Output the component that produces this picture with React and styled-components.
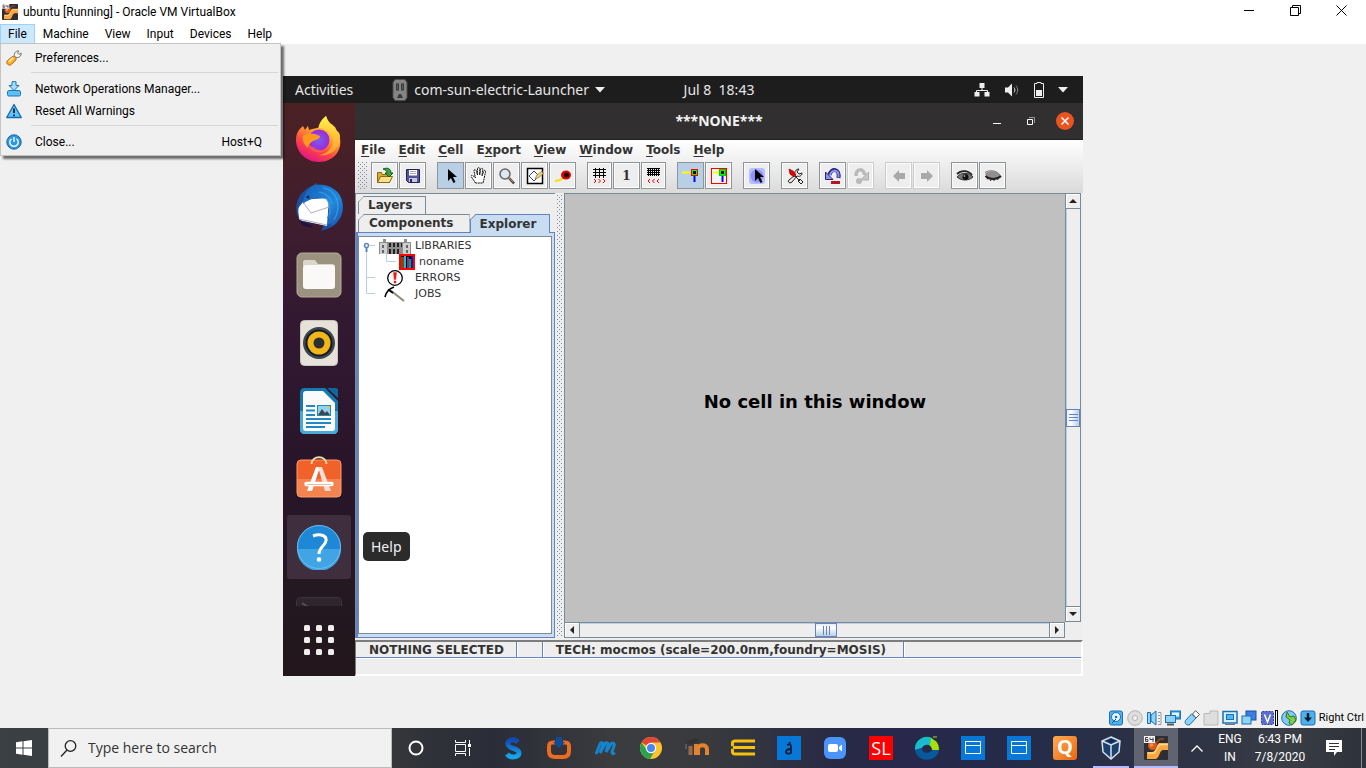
import React from "react";
import styled, { createGlobalStyle, css } from "styled-components";

const host = `Roboto, "Open Sans", sans-serif`;
const humanist = `"Open Sans", "Noto Sans", sans-serif`;
const ubuntu = `"Noto Sans", "Open Sans", sans-serif`;
const java = `"DejaVu Sans", Verdana, sans-serif`;

const Global = createGlobalStyle`
  *, *::before, *::after { box-sizing: border-box; }
  body { margin: 0; background: #f0f0f0; font-family: ${host}; }
  button { font: inherit; color: inherit; border: 0; padding: 0; margin: 0; background: none; }
  ul { list-style: none; margin: 0; padding: 0; }
  svg { display: block; flex: none; }
`;

const Page = styled.div`
  min-height: 100vh;
  display: flex;
  flex-direction: column;
  background: #f0f0f0;
`;

/* ---------- host window ---------- */
const HostTitle = styled.header`
  height: 24px;
  display: flex;
  align-items: center;
  background: #fff;
  padding: 0 2px;
  color: #000;
`;
const HostName = styled.h1`
  flex: 1;
  margin: 0 0 0 5px;
  font: 400 12px/20px ${host};
`;
const CaptionButton = styled.button`
  width: 46px;
  height: 20px;
  align-self: flex-start;
  display: grid;
  place-items: center;
`;
const HostMenuBar = styled.nav`
  position: relative;
  height: 20px;
  display: flex;
  background: #fff;
  font-size: 12px;
  line-height: 18px;
`;
const HostMenuButton = styled.button`
  height: 20px;
  padding: 0 7px;
  border: 1px solid ${(p) => (p.$open ? "#99d1ff" : "transparent")};
  background: ${(p) => (p.$open ? "#cce8ff" : "transparent")};
`;
const DropMenu = styled.ul`
  position: absolute;
  z-index: 5;
  left: 0;
  top: 19px;
  width: 281px;
  padding: 3px 2px 2px;
  background: #f0f0f0;
  border: 1px solid #c4c4c4;
  box-shadow: 3px 3px 2px rgba(0, 0, 0, 0.55);
`;
const DropItem = styled.button`
  width: 100%;
  height: 22px;
  display: grid;
  grid-template-columns: 32px 1fr auto;
  align-items: center;
  padding: 0 16px 0 0;
  text-align: left;
  line-height: 20px;
  svg { margin-left: 3px; }
`;
const DropRule = styled.li`
  height: 9px;
  margin-left: 28px;
  padding-top: 3px;
  &::before { content: ""; display: block; height: 1px; background: #d5d5d5; }
`;

const Stage = styled.main`
  flex: 1;
  display: flex;
  padding: 32px max(16px, calc(50% - 400px));
`;
const HostStatus = styled.footer`
  height: 20px;
  display: flex;
  align-items: center;
  justify-content: flex-end;
  gap: 3px;
  padding-right: 2px;
  font-size: 11px;
  line-height: 20px;
  white-space: nowrap;
`;
const Bar = styled.span`
  width: 3px;
  height: 16px;
  margin-left: -4px;
  border: 1px solid #000;
  background: #fff;
`;

/* ---------- guest desktop ---------- */
const Guest = styled.section`
  flex: 1;
  min-height: 600px;
  min-width: 0;
  display: flex;
  flex-direction: column;
  font-family: ${ubuntu};
`;
const TopBar = styled.div`
  height: 27px;
  display: grid;
  grid-template-columns: 1fr auto 1fr;
  align-items: center;
  background: #1d1d1d;
  color: #e6e6e6;
  font-size: 14px;
  line-height: 26px;
`;
const TopLeft = styled.div`
  display: flex;
  align-items: center;
  padding-left: 12px;
`;
const Launcher = styled.button`
  display: flex;
  align-items: center;
  gap: 6px;
  margin-left: 39px;
  white-space: nowrap;
`;
const Clock = styled.button`
  white-space: pre;
  padding-left: 72px;
`;
const Tray = styled.div`
  display: flex;
  justify-content: flex-end;
  align-items: center;
  gap: 14px;
  padding-right: 15px;
`;
const Desk = styled.div`
  flex: 1;
  display: flex;
  min-height: 0;
`;
const Dock = styled.nav`
  width: 72px;
  flex: none;
  display: flex;
  flex-direction: column;
  align-items: center;
  gap: 4px;
  padding-top: 4px;
  background: linear-gradient(#4b2124 0, #431f2b 15%, #361a31 32%, #2f1830 45%, #29152a 62%, #241822 85%, #22161b 100%);
`;
const DockItem = styled.button`
  position: relative;
  width: 64px;
  height: 64px;
  flex: none;
  display: grid;
  place-items: center;
  border-radius: 3px;
  background: ${(p) => (p.$active ? "#3e2e3e" : "transparent")};
`;
const Peek = styled.button`
  height: 23px;
  width: 64px;
  display: grid;
  justify-items: center;
  align-items: start;
  padding-top: 14px;
  overflow: hidden;
`;
const AppsButton = styled.button`
  flex: 1;
  width: 64px;
  display: grid;
  place-items: center;
  padding-bottom: 6px;
`;
const Tooltip = styled.span`
  position: absolute;
  z-index: 3;
  left: 76px;
  top: 17px;
  height: 29px;
  padding: 0 8px;
  border-radius: 5px;
  background: #2b2b2b;
  color: #f0f0f0;
  font-size: 14px;
  line-height: 29px;
`;
const AppWindow = styled.div`
  flex: 1;
  min-width: 0;
  display: flex;
  flex-direction: column;
  background: #eee;
  color: #333;
  font-family: ${java};
`;
const AppTitle = styled.header`
  height: 37px;
  display: grid;
  grid-template-columns: 1fr auto 1fr;
  align-items: center;
  background: #322f30;
  border-bottom: 1px solid #222;
  color: #f2f2f2;
  h2 { margin: 0; font: 700 14px/36px ${ubuntu}; }
`;
const AppControls = styled.div`
  display: flex;
  justify-content: flex-end;
  align-items: center;
  gap: 26px;
  padding-right: 9px;
`;
const CloseDot = styled.button`
  width: 18px;
  height: 18px;
  margin-left: -5px;
  display: grid;
  place-items: center;
  border-radius: 50%;
  background: #e95420;
`;
const Chrome = styled.div`
  background: linear-gradient(#fff, #dadada);
`;
const MenuRow = styled.nav`
  height: 20px;
  display: flex;
  gap: 13px;
  padding-left: 6px;
  font: 700 12px/19px ${java};
  u { text-underline-offset: 2px; }
`;
const ToolBar = styled.div`
  height: 33px;
  display: flex;
  gap: 11px;
  padding: 2px 0 0 3px;
`;
const dots = css`
  background-image: radial-gradient(circle at 0 0, #7a8a99 1px, transparent 1px), radial-gradient(circle at 0 0, #7a8a99 1px, transparent 1px);
  background-size: 4px 4px;
  background-position: 0 0, 2px 2px;
`;
const Grip = styled.span`
  width: 10px;
  height: 28px;
  margin: 0 -8px 0 0;
  ${dots}
`;
const ToolGroup = styled.div`
  display: flex;
  gap: 1px;
`;
const ToolButton = styled.button`
  width: ${(p) => (p.$narrow ? 25 : 27)}px;
  height: 27px;
  display: grid;
  place-items: center;
  border: 1px solid ${(p) => (p.$dim ? "#ccc" : "#8f9499")};
  background: ${(p) => (p.$on ? "#b8cfe5" : "#eee")};
  box-shadow: ${(p) => (p.$on ? "none" : "inset -1px -1px #fff, inset 1px 1px #fafafa")};
  font: 700 12px/20px "DejaVu Serif", serif;
`;
const Work = styled.div`
  flex: 1;
  display: flex;
  min-height: 0;
  padding-bottom: 2px;
`;
const SidePanel = styled.aside`
  width: 200px;
  flex: none;
  display: flex;
  flex-direction: column;
  border-top: 1px solid #7a8a99;
  border-left: 1px solid #7a8a99;
  padding-top: 2px;
`;
const Tabs = styled.div`
  display: flex;
  padding-left: 2px;
`;
const Tab = styled.button`
  position: relative;
  height: ${(p) => (p.$on ? 19 : 18)}px;
  margin-bottom: ${(p) => (p.$on ? -1 : 0)}px;
  padding: ${(p) => (p.$wide ? "0 15px 0 10px" : "0 13px 0 9px")};
  border: 1px solid ${(p) => (p.$on ? "#6382bf" : "#7a8a99")};
  border-bottom: 0;
  background: ${(p) => (p.$on ? "#c8ddf2" : "#eee")};
  clip-path: polygon(6px 0, 100% 0, 100% 100%, 0 100%, 0 6px);
  font: 700 12px/17px ${java};
  &::before {
    content: "";
    position: absolute;
    left: -3px;
    top: 2px;
    width: 9px;
    height: 1px;
    background: #7a8a99;
    transform: rotate(-45deg);
  }
`;
const TabBody = styled.div`
  flex: 1;
  display: flex;
  border: 1px solid #6382bf;
  border-left-width: 2px;
  padding: 3px 2px 3px 0;
  background: #c8ddf2;
`;
const Tree = styled.ul`
  flex: 1;
  padding-top: 1px;
  background: #fff;
  border: 1px solid #7a8a99;
  font: 400 11px/16px ${java};
  position: relative;
`;
const TreeRow = styled.li`
  height: 16px;
  display: flex;
  align-items: center;
  padding-left: ${(p) => p.$indent}px;
  gap: 4px;
`;
const IconCell = styled.span`
  width: ${(p) => p.$w}px;
  display: grid;
  place-items: center;
`;
const Splitter = styled.div`
  width: 9px;
  flex: none;
  display: flex;
  justify-content: center;
  padding: 2px 0;
  &::before { content: ""; width: 5px; ${dots} }
`;
const Editor = styled.div`
  flex: 1;
  min-width: 0;
  display: grid;
  grid-template-columns: 1fr 16px;
  grid-template-rows: 1fr 16px;
  border-top: 1px solid #7a8a99;
  border-left: 1px solid #7a8a99;
  margin-right: 2px;
`;
const Canvas = styled.div`
  display: grid;
  place-items: center;
  background: #c0c0c0;
  color: #000;
  font: 700 18px/24px ${java};
  padding-bottom: 12px;
`;
const Scroll = styled.div`
  display: flex;
  flex-direction: ${(p) => (p.$v ? "column" : "row")};
  border: 1px solid #7a8a99;
  ${(p) => (p.$v ? "border-top: 0;" : "border-left: 0;")}
  background: #eee;
  box-shadow: inset 1px 1px #b8cfe5;
`;
const ScrollButton = styled.button`
  flex: none;
  width: ${(p) => (p.$v ? "auto" : "15px")};
  height: ${(p) => (p.$v ? "15px" : "auto")};
  display: grid;
  place-items: center;
  background: #eee;
  border: 0 solid #7a8a99;
  border-width: ${(p) => p.$edge};
  box-shadow: inset 1px 1px #fff;
`;
const Track = styled.div`
  flex: 1;
  display: flex;
  align-items: center;
  justify-content: center;
  flex-direction: ${(p) => (p.$v ? "column" : "row")};
`;
const Thumb = styled.div`
  width: ${(p) => (p.$v ? "100%" : "22px")};
  height: ${(p) => (p.$v ? "18px" : "100%")};
  ${(p) => (p.$v ? "margin-top: 20px;" : "margin-left: 23px;")}
  display: grid;
  place-items: center;
  border: 1px solid #6382bf;
  background: linear-gradient(${(p) => (p.$v ? "90deg, " : "")}#e3edf7, #fff 30%, #b8cfe5);
`;
const StatusArea = styled.footer`
  height: 36px;
  border: solid;
  border-width: 2px 2px 2px 1px;
  border-color: #7d7d7d #fff #fff #7d7d7d;
  display: flex;
  flex-direction: column;
`;
const StatusRow = styled.div`
  height: 16px;
  display: flex;
  border-bottom: 1px solid #6382bf;
  box-shadow: 0 1px #fff;
  font: 700 12px/17px ${java};
  white-space: nowrap;
`;
const StatusCell = styled.span`
  min-width: 26px;
  padding: 0 12px 0 13px;
  border-right: 1px solid #6382bf;
  box-shadow: 1px 0 #fff;
  &:last-child { padding-right: 17px; }
`;

/* ---------- taskbar ---------- */
const Taskbar = styled.div`
  height: 40px;
  display: flex;
  align-items: stretch;
  color: #fff;
  background: linear-gradient(90deg, #3a4044 0, #35373a 28%, #2a2c38 36%, #3b3c3e 45%, #383a3e 52%, #272a44 61%, #27284c 66%, #242b48 74%, #282f47 80%, #303544 89%, #3a3d45 94%, #2d323b 100%);
`;
const TaskButton = styled.button`
  position: relative;
  width: ${(p) => p.$w || 46}px;
  flex: none;
  display: grid;
  place-items: center;
  background: ${(p) => (p.$on ? "#606370" : "transparent")};
  &::after {
    content: "";
    display: ${(p) => (p.$line ? "block" : "none")};
    position: absolute;
    left: ${(p) => (p.$on ? 0 : 5)}px;
    right: ${(p) => (p.$on ? 0 : 5)}px;
    bottom: 0;
    height: 2px;
    background: #b9b9ff;
  }
`;
const Search = styled.label`
  width: 344px;
  flex: 0 1 344px;
  display: flex;
  align-items: center;
  gap: 11px;
  padding-left: 11px;
  background: #f1f1f1;
  border: 1px solid #bababa;
  input {
    flex: 1;
    min-width: 0;
    border: 0;
    padding: 0;
    outline: 0;
    background: none;
    font: 400 14px/20px ${humanist};
  }
  input::placeholder { color: #333; opacity: 1; }
`;
const TaskApps = styled.div`
  display: flex;
  flex: 1;
  padding-left: 1px;
`;
const TaskGap = styled.span`
  width: 3px;
`;
const SysTray = styled.div`
  display: flex;
  align-items: stretch;
  font-size: 12px;
  line-height: 18px;
  text-align: center;
`;
const TrayText = styled.button`
  width: ${(p) => p.$w}px;
  display: flex;
  flex-direction: column;
  justify-content: center;
  align-items: center;
`;
const ShowDesktop = styled.button`
  width: 5px;
  border-left: 1px solid #888b92;
`;

/* ---------- drawings ---------- */
const S = ({ w = 16, h = w, vb, children, ...rest }) => (
  <svg width={w} height={h} viewBox={vb || `0 0 ${w} ${h}`} fill="none" aria-hidden="true" {...rest}>
    {children}
  </svg>
);

const VmIcon = ({ size = 16 }) => (
  <S w={size} vb="0 0 24 24">
    <rect width="24" height="24" rx="1" fill="#2e2f34" />
    <path d="M3 16h5c4 0 4-7 7-9h9v7h-5c-4 1-3 7-7 9H3z" fill="#fba63e" />
    <path d="M4 17h5c4 0 3-6 7-8.500h8" stroke="#ffd88c" strokeWidth="1.500" />
    <path d="M11 8l5-5h4" stroke="#7a4630" strokeWidth="2" />
    <circle cx="8.500" cy="9.500" r="4.500" fill="#dc5a1e" />
    <circle cx="7.500" cy="9" r="1.800" fill="#f5914f" />
    <rect x="0" y="0" width="11" height="7" fill="#f4f4f4" />
    <path d="M4 1.500H1.500v4H4v-2H2M6 1.500v2h3.500M9 1.500v4.500" stroke="#444" />
  </S>
);

const Wrench = () => (
  <S>
    <path d="M8.500 6.500C7.500 3 10 .5 13 1l-1.500 2 1.500 1.500L15.200 3c.3 3-2 5-5 4.500z" fill="#f4f4f4" stroke="#777" />
    <path d="M1.500 10.500l5-4c2-1 4.500 1.500 3.300 3.500l-4.500 4.500c-2.500 2-6-1.200-3.800-4z" fill="#ffb02a" stroke="#b5630f" />
    <path d="M3 11.500l4-3.500" stroke="#ffe9a0" strokeWidth="1.800" />
  </S>
);
const NetDown = () => (
  <S>
    <path d="M1.500 11c0-1 .5-1.500 1.500-1.500h10c1 0 1.500.5 1.500 1.500v2.500c0 1-.5 1.500-1.500 1.500H3c-1 0-1.500-.5-1.500-1.500z" fill="#5cc0f5" stroke="#1c74b8" />
    <path d="M6 .7h4v3.800h3L8 9.500l-5-5h3z" fill="#a5e0ff" stroke="#1c74b8" />
  </S>
);
const WarnIcon = () => (
  <S>
    <path d="M8 1.500L15.300 14.500H.7z" fill="#5fc4fb" stroke="#1569ad" strokeWidth="1.300" strokeLinejoin="round" />
    <path d="M8 5.500v4.500M8 11.500v1.800" stroke="#0b2a4c" strokeWidth="2" />
  </S>
);
const PowerIcon = () => (
  <S>
    <circle cx="8" cy="8" r="7.200" fill="#2d96dc" stroke="#1567a8" />
    <path d="M5.500 4.800a4.200 4.200 0 1 0 5 0M8 3v5" stroke="#e8f6ff" strokeWidth="1.500" />
  </S>
);

const Socket = () => (
  <S w={16} h={22}>
    <path d="M3 .5h10l2 3v15l-2 3H3l-2-3v-15z" fill="#858585" stroke="#4e4e4e" />
    <path d="M4 4.500h3v7H4zM9 4.500h3v7H9zM7 15h2l2 4H5z" fill="#3a3a3a" />
    <path d="M5 5.500h1v5H5zM10 5.500h1v5h-1z" fill="#5c5c5c" />
  </S>
);
const Caret = ({ color = "#eee" }) => (
  <S w={10} h={6}><path d="M0 0h10L5 5.500z" fill={color} /></S>
);
const Network = () => (
  <S w={16}>
    <path d="M5.500 1h5v5h-5zM.5 10h5v4.500h-5zM10.500 10h5v4.500h-5z" fill="#eee" />
    <path d="M8 5v3M2.500 11V8.500h11V11" stroke="#eee" />
  </S>
);
const Sound = () => (
  <S w={16}>
    <path d="M1 5.500h3l4-4v13l-4-4H1z" fill="#eee" />
    <path d="M10 5.500c1.200 1.500 1.200 3.500 0 5" stroke="#ddd" />
    <path d="M12 3.500c2.300 3 2.300 6 0 9" stroke="#888" />
  </S>
);
const Battery = () => (
  <S w={10} h={16}>
    <path d="M3 1.500V.5h4v1h2.500v14h-9v-14z" stroke="#eee" />
    <path d="M2 8h6v6H2z" fill="#eee" />
  </S>
);

const Firefox = () => (
  <S w={46} vb="0 0 46 46">
    <defs>
      <linearGradient id="ffA" x1=".8" y1="0" x2=".3" y2="1"><stop offset="0" stopColor="#fff44f" /><stop offset=".4" stopColor="#ffa62b" /><stop offset=".7" stopColor="#ff4545" /><stop offset="1" stopColor="#e0128a" /></linearGradient>
      <radialGradient id="ffB"><stop offset="0" stopColor="#7a5cf0" /><stop offset="1" stopColor="#9a2bd8" /></radialGradient>
      <linearGradient id="ffC" x1="0" y1="0" x2="0" y2="1"><stop offset="0" stopColor="#fff148" /><stop offset="1" stopColor="#ff9a2e" /></linearGradient>
    </defs>
    <path d="M7 10l2 4c1-2 2-3 3-4l1 4c3-1 6-2 9-2 2-6 5-9 8-12 2 5 4 8 7 9l1 4 3 2c3 5 4 10 3 15C42 40 33 46 23 46 9 46 0 35 0 24 0 17 3 13 7 10z" fill="url(#ffA)" />
    <path d="M30 0c-4 3-7 7-7 12 9 0 14 7 14 14-1 8-7 12-14 13 10 2 21-5 21-18 0-3-1-5-3-6l-2-4c-4-3-8-5-9-11z" fill="url(#ffC)" />
    <circle cx="23" cy="24" r="10.500" fill="url(#ffB)" />
    <path d="M7 20c3-3 9-2 12-2l5 2c0 3-4 4-7 5-3 2-5 4-5 7-4-3-6-8-5-12z" fill="#ff9a1f" />
    <path d="M13 30c2 6 10 8 16 5-5-1-8-1-11-4z" fill="#ff7139" opacity=".5" />
  </S>
);
const Thunderbird = () => (
  <S w={48} vb="0 0 48 48">
    <defs><linearGradient id="tb" x1="0" y1="0" x2="1" y2="1"><stop offset="0" stopColor="#1560b8" /><stop offset=".6" stopColor="#2089dc" /><stop offset="1" stopColor="#1b4aa5" /></linearGradient></defs>
    <path d="M17 3l4-3 2 2c12-2 25 8 25 22 0 12-8 21-22 24l3-6L5 38C-3 26 2 9 17 3z" fill="#1c4f9f" />
    <path d="M4 37c1-3-2-8 0-13l4-5 9-3 17-1-2 28z" fill="#fff" />
    <path d="M8 19l8 11 18-6M32 42L4 36" stroke="#b0b0ba" />
    <path d="M17 3c9-3 21 0 27 8 6 9 5 22-4 30l-5 3 2-4-5 2 2-6-2-1c4-7 3-14-1-19-7-2-14-2-23 5 1-7 2-13 9-18z" fill="url(#tb)" />
    <path d="M28 5c7 1 12 6 14 12 2 7 0 15-3 20M24 9c7 1 12 6 13 12M31 15c4 5 5 11 3 17" stroke="#4db0ee" strokeWidth="1.500" opacity=".5" />
    <circle cx="13" cy="14" r="1.500" fill="#102050" />
    <path d="M4 36c5 5 10 4 14 8C11 45 5 42 4 36z" fill="#22104a" />
  </S>
);
const Files = () => (
  <S w={46} vb="0 0 46 46">
    <rect x="1" y="1" width="44" height="44" rx="5" fill="#9b927f" stroke="#b5ad9b" />
    <path d="M7 14v-4c0-1 1-2 2-2h10l3 4h14c2 0 3 1 3 3z" fill="#dad6ca" />
    <rect x="7" y="13" width="32" height="24" rx="3" fill="#faf9f7" />
  </S>
);
const Speaker = () => (
  <S w={38} h={46}>
    <rect x=".5" y=".5" width="37" height="45" rx="4" fill="#e6e2d9" stroke="#cbc6bb" />
    <circle cx="19" cy="23" r="16" fill="#3b4651" /><circle cx="19" cy="23" r="13.500" fill="#17191c" />
    <circle cx="19" cy="23" r="11.500" fill="#f1b719" /><circle cx="19" cy="23" r="5.500" fill="#2d3033" />
  </S>
);
const Writer = () => (
  <S w={38} h={46}>
    <path d="M4 0h21l13 13v29c0 2-2 4-4 4H4c-2 0-4-2-4-4V4c0-2 2-4 4-4z" fill="#1479ae" />
    <path d="M0 23h38v19c0 2-2 4-4 4H4c-2 0-4-2-4-4z" fill="#48a8d7" />
    <path d="M27 0h9c1 0 2 1 2 2v8z" fill="#0f6899" />
    <path d="M6 3h17l12 12v25c0 2-1 3-3 3H6c-2 0-3-1-3-3V6c0-2 1-3 3-3z" fill="#fafafa" />
    <path d="M6 18h9M6 22.500h9M6 27h9M6 31h25M6 35h25M6 39h19" stroke="#2388c2" strokeWidth="2" />
    <rect x="17" y="17" width="14" height="11" fill="#2388c2" /><rect x="18" y="18" width="12" height="9" fill="#90d4f3" />
    <path d="M18 27l4-6 3 4 2-2 3 4z" fill="#444" /><path d="M27 18h3v3z" fill="#f7bd2b" />
  </S>
);
const Software = () => (
  <S w={46} vb="0 3 46 46">
    <rect x="1" y="7" width="44" height="37" rx="4" fill="#f1622b" />
    <path d="M1 26h44v14c0 2-2 4-4 4H5c-2 0-4-2-4-4z" fill="#f4834f" />
    <rect x="1" y="7" width="44" height="37" rx="4" stroke="#ff9a6c" />
    <path d="M15.500 11c0-9 15-9 15 0" stroke="#f5d9a6" strokeWidth="1.800" />
    <path d="M20 14h4l-8 24h-5z" fill="#fff" /><path d="M22 14h4l9 24h-6z" fill="#f9ded3" />
    <path d="M10.500 31h25" stroke="#fff" strokeWidth="4.500" strokeLinecap="round" /><path d="M11 31.500h24" stroke="#f0b9a3" />
  </S>
);
const HelpIcon = () => (
  <S w={46} vb="0 0 46 46">
    <circle cx="23" cy="23" r="22" fill="#1e87d6" /><path d="M1 25h44a22 22 0 0 1-44 0z" fill="#40a4e5" />
    <circle cx="23" cy="23" r="21.500" stroke="#6bbdf0" />
    <path d="M17 12c8-3 14 0 13 5s-7 6-7 13" stroke="#fff" strokeWidth="3" />
    <circle cx="23" cy="35.500" r="2.300" fill="#fff" />
  </S>
);
const Terminal = () => (
  <S w={46} h={12}>
    <rect x=".5" y=".5" width="45" height="20" rx="4" fill="#2e262c" stroke="#3d353b" /><path d="M6 6l6 4" stroke="#554d55" strokeWidth="2" />
  </S>
);
const AppsGrid = () => (
  <S w={32}>
    {[0, 12, 24].map((y) => [0, 12, 24].map((x) => <rect key={`${x}-${y}`} x={x + 1} y={y + 1} width="6" height="6" rx="1.500" fill="#efede9" />))}
  </S>
);

const OpenI = () => (
  <S w={18}><path d="M1.500 15.500v-10h4l1 2h7v8z" fill="#dba92c" stroke="#8d6a12" /><path d="M1.500 15.500l3-6h12l-3 6z" fill="#fbe28a" stroke="#8d6a12" /><path d="M7 2c5-2 8 0 8 4h2l-4 4-4-4h2c0-2-1-3-4-4z" fill="#3aa33a" stroke="#175a17" /></S>
);
const SaveI = () => (
  <S w={16}><path d="M1.500 1.500h13v13h-11l-2-2z" fill="#545299" stroke="#232160" /><path d="M4 2h8v5.500H4z" fill="#fff" /><path d="M5 3.500h6M5 5.500h6" stroke="#aaa" /><path d="M4 10h8v4H4z" fill="#c6c8dc" /><path d="M5 11h2v3H5z" fill="#28265f" /></S>
);
const Pointer = ({ color = "#000" }) => (
  <S w={12} h={16}><path d="M3 1v12l3-3 2.500 5 2-1-2.500-5h4z" fill={color} /></S>
);
const HandI = () => (
  <S w={18} h={17}><path d="M5.500 16l-4-6c-1-2 1-2 2-1l2 2-1.500-7c0-2 2-2 2.200 0L7.500 8V2c0-2 2-2 2.200 0v6l1-6c.5-1.500 2-1 2 .5L12 9l1.800-5c.6-1.300 2-.8 1.700.8L14 12l-1 4z" fill="#fff" stroke="#111" strokeDasharray="2 .6" /></S>
);
const ZoomI = () => (
  <S w={18}><circle cx="7" cy="7" r="5" fill="#dfe6ee" stroke="#666" strokeWidth="1.500" /><path d="M11 11l5 5.500" stroke="#444" strokeWidth="2.500" /><path d="M11 11l4 4" stroke="#c08a6a" /></S>
);
const OutlineI = () => (
  <S w={18}><rect x="1.500" y="1.500" width="15" height="15" fill="#fff" stroke="#000" strokeWidth="1.500" /><path d="M3 9l5-5 5 5-5 5z" stroke="#224a9a" /><path d="M9 12l2-4 5-4 1 3-5 4z" fill="#f2cf85" stroke="#8a6a20" strokeWidth=".7" /></S>
);
const MeasureI = () => (
  <S w={18}><path d="M1 14l5-1 5-4" stroke="#f1e400" strokeWidth="2" /><ellipse cx="12" cy="8" rx="5" ry="4.500" fill="#e00000" /><circle cx="12.500" cy="8" r="2.500" fill="#100" /></S>
);
const GridI = ({ dense }) => (
  <S w={15} h={17}>
    {dense ? (
      <path d="M1 1.500h13M1 3.500h13M1 5.500h13M1 7.500h13M2.500 1v8M4.500 1v8M6.500 1v8M8.500 1v8M10.500 1v8M12.500 1v8" stroke="#000" />
    ) : (
      <path d="M1 2.500h13M1 5.500h13M1 8.500h13M3.500 1v10M7.500 1v10M11.500 1v10" stroke="#000" />
    )}
    <path d={dense ? "M4 12l-2 2 2 2M8.500 12l-2 2 2 2M13 12l-2 2 2 2" : "M2 12l2 2-2 2M6.500 12l2 2-2 2M11 12l2 2-2 2"} stroke="#f00" />
  </S>
);
const PortI = ({ boxed }) => (
  <S w={18}>
    {boxed ? <rect x="1.500" y="1.500" width="15" height="15" fill="#f4f4f4" stroke="#f00" /> : null}
    <path d={boxed ? "M3 5.500h7" : "M0 5.500h8"} stroke="#ff0" strokeWidth="2" />
    <path d="M12.500 9v6" stroke="#00f" strokeWidth="2" />
    <rect x="9.500" y="2.500" width="6" height="6" fill="#0f0" stroke={boxed ? "#0c0" : "#f00"} /><path d="M11 4h3v3h-3z" fill="#000" />
  </S>
);
const GlowPointer = () => (
  <S w={18}><rect x="1" y="1" width="16" height="16" rx="3" fill="#b9bcff" /><circle cx="9" cy="9" r="6.500" fill="#8d93f7" /><path d="M7 2v12l3-3 2.500 5 2-1-2.500-5h4z" fill="#000" /></S>
);
const ToolsI = () => (
  <S w={18}><path d="M13 2l-2 3 2 2 3-1c0 3-3 4-5 3l-5 6c-2 2-5 0-3-2l6-5c-1-3 1-6 4-6z" fill="#e8e8e8" stroke="#222" /><path d="M3 2l4 2 3 4-2 2-4-3z" fill="#e00" stroke="#800" strokeWidth=".7" /><path d="M9 9l5 5M14 12l3 3-2 2-3-3z" stroke="#222" /></S>
);
const UndoI = ({ redo }) => (
  <S w={18}>
    {redo ? (
      <><path d="M4 9C4 1 12 1 12.500 8" stroke="#b9b9b9" strokeWidth="3.500" /><path d="M16.500 5v8h-8z" fill="#c4c4c4" stroke="#b0b0b0" /><circle cx="7" cy="14" r="3" fill="#b9b9b9" /></>
    ) : (
      <><path d="M14.500 11C16 1 7 1 5.500 8" stroke="#25257a" strokeWidth="4" /><path d="M14.500 10.500C15.500 2 7.500 2 6 8" stroke="#8f93ee" strokeWidth="2" /><path d="M1.500 5v7.500H9z" fill="#8f93ee" stroke="#25257a" /><path d="M7 14h9v3H7z" fill="#b31622" /></>
    )}
  </S>
);
const ArrowI = ({ right }) => (
  <S w={14}><path d={right ? "M13 7L7 1v3H1v6h6v3z" : "M1 7l6-6v3h6v6H7v3z"} fill="#a9a9a9" /></S>
);
const EyeI = ({ shut }) => (
  <S w={18} h={12}>
    {shut ? (
      <><path d="M1 4c3-4 12-4 16 2-3 4-13 3-16-2z" fill="#8f8f8f" /><path d="M1 2.500c5-3 12-2 15 2.500" stroke="#777" /><path d="M1.500 6c4 4 11 4 15.500 0" stroke="#222" strokeWidth="2" /><path d="M4 8l-1 1.500M7 9l-.5 2M10 9v2M13 8l1 2" stroke="#222" /></>
    ) : (
      <><path d="M1 4c4-4 11-4 15 1" stroke="#222" strokeWidth="1.800" /><path d="M1 7c4-5 12-5 16 0-4 4-12 4-16 0z" fill="#777" stroke="#333" /><circle cx="9.500" cy="7" r="3" fill="#111" /><circle cx="8.500" cy="6" r=".8" fill="#eee" /></>
    )}
  </S>
);

const LibraryI = () => (
  <S w={32} h={15}><path d="M0 3h4V0h3v3h18V0h3v3h4v12H0z" fill="#8e8e8e" /><path d="M1 4h7v11H1zM24 4h7v11h-7z" fill="#cfcfcf" /><path d="M3 6h2v3H3zM3 11h2v3H3zM27 6h2v3h-2zM27 11h2v3h-2z" fill="#666" /><path d="M10 4h2v4h-2zM14 4h2v4h-2zM18 4h2v4h-2zM22 4h1v4h-1zM10 10h2v5h-2zM14 10h2v5h-2zM18 10h2v5h-2z" fill="#222" /></S>
);
const BookI = () => (
  <S w={16}><rect x="1" y="1" width="14" height="14" fill="#000" stroke="#f00" strokeWidth="2" /><path d="M2 3h3v11H2z" fill="#7d4a12" /><path d="M5 2h2v12H5z" fill="#2bb6c9" /><path d="M8 3h2v11H8z" fill="#802ab0" /><path d="M10 5h2v9h-2z" fill="#14a03c" /><path d="M12 2h2v12h-2z" fill="#0a18c0" /></S>
);
const ErrorI = () => (
  <S w={16}><circle cx="8" cy="8" r="7.300" fill="#fff" stroke="#000" strokeWidth="1.300" /><path d="M6.500 2.500h3l-.7 7H7.200zM7 11h2v2H7z" fill="#f21818" stroke="#f21818" strokeWidth=".5" /></S>
);
const PickI = () => (
  <S w={22} h={16}><path d="M6 4l14 11" stroke="#8b8b7b" strokeWidth="2" /><path d="M1 11C2 6 4 3 10 1M4 3.500l5 3.500" stroke="#000" strokeWidth="1.600" /></S>
);
const TreeLines = styled(S)`
  position: absolute;
  left: 3px;
  top: 4px;
`;

const Tri = ({ d, w = 10, h = 10 }) => <S w={w} h={h}><path d={d} fill="#222" /></S>;

/* VM status indicators */
const ind = "#1b6fb5", lite = "#8fd3f8";
const indicators = [
  ["Hard disks", <><rect x="1.500" y="1" width="13" height="14" rx="2" fill="#49b4ef" stroke={ind} /><circle cx="8" cy="7" r="4.500" fill="#e8f6ff" stroke={ind} /><circle cx="8" cy="7" r="1.300" fill={ind} /><path d="M4 13l4-4" stroke="#134c80" /></>],
  ["Optical", <><circle cx="8" cy="8" r="7.300" fill="#ddd" stroke="#b2b2b2" /><circle cx="8" cy="8" r="2.500" fill="#f4f4f4" stroke="#b2b2b2" /></>],
  ["Audio", <><path d="M1.500 2.500h3v11h-3zM5 5l5-4v14l-5-4z" fill={lite} stroke={ind} /><path d="M12 2.500h3v12h-3M12 5.500h2M12 8.500h2M12 11.500h2" stroke="#9b9b9b" /></>],
  ["Network", <><rect x="5.500" y="1" width="10" height="8" fill="#3b9edf" stroke={ind} /><rect x="7" y="2.500" width="7" height="4" fill="#e0f4ff" /><rect x=".5" y="5.500" width="10" height="7" fill={lite} stroke={ind} /><path d="M2 14.500h7" stroke="#555" strokeWidth="2" /></>],
  ["USB", <><path d="M1.500 10.500l6-6.500 4.500 4-6 6.500c-3 1.500-6-1-4.500-4z" fill={lite} stroke={ind} /><path d="M8.500 4l3-3.300 4 3.800-3.500 3.500z" fill="#fff" stroke="#555" /></>],
  ["Shared folders", <path d="M1 15V3.500h6V1h8v14z" fill="#dedede" stroke="#b9b9b9" />],
  ["Display", <><rect x="1" y="1.500" width="14" height="11.500" fill="#d6f0ff" stroke={ind} strokeWidth="1.500" /><rect x="4.500" y="4.500" width="7" height="5" fill="#4fb8f0" stroke={ind} /><path d="M3 14.500h10" stroke="#777" /></>],
  ["Recording", <><rect x="5" y="1" width="10" height="9" fill="#3d7de0" stroke="#1d4da5" /><rect x="1" y="6" width="9" height="8" fill={lite} stroke={ind} /></>],
  ["Features", <><rect x="1.500" y="1.500" width="12" height="13" rx="1" fill="#5a6ed0" stroke="#323f8f" strokeDasharray="2 1" /><path d="M4.500 4.500L7.500 12l3-7.500" stroke="#fff" strokeWidth="1.500" /></>],
  ["Mouse", <><circle cx="8" cy="8" r="7.300" fill="#83c9f5" stroke={ind} /><path d="M6 2l3 5 4-1 2 4-4 5-3-2 1-3-4-3z" fill="#7ccf46" stroke="#36791f" /></>],
  ["Keyboard", <><rect x="1" y="1" width="14" height="14" rx="2" fill="#4db1ee" stroke={ind} /><path d="M8 3v6" stroke="#0a1c30" strokeWidth="2.500" /><path d="M4 7.500h8L8 12z" fill="#0a1c30" /></>],
];

/* Taskbar drawings */
const Cube = () => (
  <S w={22} h={24}><path d="M11 1l9 4-1 11-8 7-8-7L2 5z" fill="#1d3f6b" stroke="#d5e2ee" strokeWidth="1.500" /><path d="M2 5l9 4 9-4M11 9v13" stroke="#d5e2ee" strokeWidth="1.500" /><path d="M7 5l4-2 4 2-4 2z" fill="#0f2a50" /></S>
);
const taskIcons = [
  ["Skype", <S w={18} h={24}><defs><linearGradient id="sg" x1="0" y1="0" x2="0" y2="1"><stop offset="0" stopColor="#1348b5" /><stop offset="1" stopColor="#12a9e8" /></linearGradient></defs><path d="M14 6C10 2 3 4 4 8.500S15 12 15 17 6 22 3 18" stroke="url(#sg)" strokeWidth="5" /></S>],
  ["Power", <S w={26} h={24}><path d="M9 6.500H7c-3 0-4 1-4 4V15c0 4 2 6 6 6h8c4 0 6-2 6-6v-4.500c0-3-1-4-4-4h-2" stroke="#ee6b22" strokeWidth="4" /><path d="M10 1h6v5h3l-6 6-6-6h3z" fill="#0b4c9c" /></S>],
  ["Mathtype", <S w={24}><path d="M3 18l4-10c1-2 4-1 3 1l-3 8 5-9c1-2 4-1 3 1l-2 7 5-8c2-2 4 0 3 2l-2 6c0 2 1 2 3 1" stroke="#1683cc" strokeWidth="3" /></S>],
  ["Chrome", <S w={22}><circle cx="11" cy="11" r="11" fill="#fbc42c" /><path d="M11 11L1.500 5.500A11 11 0 0 1 20.500 5.500H11z" fill="#e04637" /><path d="M1.500 5.500A11 11 0 0 0 10 22l5-8.500-8 0z" fill="#2aa252" /><circle cx="11" cy="11" r="5.200" fill="#fff" /><circle cx="11" cy="11" r="4" fill="#4a86f0" /></S>],
  ["Moodle", <S w={26} h={20}><path d="M6.500 17V8" stroke="#9a6a48" strokeWidth="4" /><path d="M14 17v-6c0-5 9-5 9 0v6M12 6v11" stroke="#e5822d" strokeWidth="4" /><path d="M1 5l9-5 6 2-7 4z" fill="#34302f" /><path d="M2 6v5" stroke="#777" /></S>],
  ["Notes", <S w={24} h={18}><path d="M24 2H4c-3 0-3 3-2 5M24 8.500H2M24 15H4c-3 0-3-3-2-5" stroke="#f4c20d" strokeWidth="3" /></S>],
  ["Reader", <S w={24}><path d="M0 0h24v24H0z" fill="#0878d8" /><path d="M10 9c4-2 4 1 4 3v5c-2 1-5 1-5-1s2-3 5-3M12 9l1-3" stroke="#0b1b33" strokeWidth="1.800" /></S>],
  ["Zoom", <S w={22}><rect width="22" height="22" rx="6" fill="#4b94fa" /><rect x="4" y="7" width="10" height="8" rx="2" fill="#fff" /><path d="M15 10l3-2.500v7L15 12z" fill="#fff" /></S>],
];
const SLBadge = styled.span`
  width: 24px;
  height: 24px;
  background: #f00;
  font: 400 18px/24px ${humanist};
`;
const QBadge = styled(SLBadge)`
  border-radius: 3px;
  background: linear-gradient(135deg, #ffab52, #ea6710);
  font: 700 20px/22px ${humanist};
`;
const WinApp = () => (
  <S w={24}><path d="M0 0h24v24H0z" fill="#0878d8" /><path d="M4.500 5.500h15v12h-15zM4.500 9.500h15" stroke="#fff" /></S>
);
const Swirl = () => (
  <S w={24}><path d="M0 14A12 12 0 0 1 17 2l3 7-5 1a5 5 0 0 0-8 2z" fill="#18bccb" /><path d="M16 2l3 2c4 2 5 6 5 10l-6 1-3-6z" fill="#a6e00c" /><path d="M18 1h4" stroke="#a6e00c" /><path d="M0 14l7-2c0 6 8 6 10 2l7 0c-2 13-22 13-24 0z" fill="#065a9c" /></S>
);

const menus = ["Machine", "View", "Input", "Devices", "Help"];
const appMenus = [["", "F", "ile"], ["", "E", "dit"], ["", "C", "ell"], ["E", "x", "port"], ["", "V", "iew"], ["", "W", "indow"], ["", "T", "ools"], ["", "H", "elp"]];
const tools = [
  [["Open", <OpenI />], ["Save", <SaveI />]],
  [["Select", <Pointer />, { $on: true }], ["Pan", <HandI />], ["Zoom", <ZoomI />], ["Outline", <OutlineI />], ["Measure", <MeasureI />]],
  [["Coarser grid", <GridI />, { $narrow: true }], ["Grid one", "1"], ["Finer grid", <GridI dense />, { $narrow: true }]],
  [["Select objects", <PortI />, { $on: true }], ["Select area", <PortI boxed />]],
  [["Special select", <GlowPointer />]],
  [["Project settings", <ToolsI />]],
  [["Undo", <UndoI />], ["Redo", <UndoI redo />, { $dim: true }]],
  [["Back", <ArrowI />, { $dim: true }], ["Forward", <ArrowI right />, { $dim: true }]],
  [["Expand", <EyeI />], ["Unexpand", <EyeI shut />]],
];
const dock = [["Firefox", <Firefox />], ["Thunderbird", <Thunderbird />], ["Files", <Files />], ["Rhythmbox", <Speaker />], ["Writer", <Writer />], ["Software", <Software />]];

export default function App() {
  return (
    <Page>
      <Global />
      <HostTitle>
        <VmIcon />
        <HostName>ubuntu [Running] - Oracle VM VirtualBox</HostName>
        <CaptionButton aria-label="Minimize"><S w={10}><path d="M0 5.500h10" stroke="#000" /></S></CaptionButton>
        <CaptionButton aria-label="Restore"><S w={11}><path d="M.5 2.500h8v8h-8zM2.500 2.500v-2h8v8h-2" stroke="#000" /></S></CaptionButton>
        <CaptionButton aria-label="Close"><S w={11}><path d="M.5.5l10 10M10.500.5l-10 10" stroke="#000" /></S></CaptionButton>
      </HostTitle>
      <HostMenuBar>
        <HostMenuButton $open>File</HostMenuButton>
        {menus.map((m) => <HostMenuButton key={m}>{m}</HostMenuButton>)}
        <DropMenu>
          <li><DropItem><Wrench /><span>Preferences...</span></DropItem></li>
          <DropRule />
          <li><DropItem><NetDown /><span>Network Operations Manager...</span></DropItem></li>
          <li><DropItem><WarnIcon /><span>Reset All Warnings</span></DropItem></li>
          <DropRule />
          <li><DropItem><PowerIcon /><span>Close...</span><span>Host+Q</span></DropItem></li>
        </DropMenu>
      </HostMenuBar>

      <Stage>
        <Guest>
          <TopBar>
            <TopLeft>
              <button>Activities</button>
              <Launcher><Socket />com-sun-electric-Launcher<Caret /></Launcher>
            </TopLeft>
            <Clock>{"Jul 8  18:43"}</Clock>
            <Tray><Network /><Sound /><Battery /><Caret /></Tray>
          </TopBar>
          <Desk>
            <Dock>
              {dock.map(([name, icon]) => <DockItem key={name} aria-label={name}>{icon}</DockItem>)}
              <DockItem $active aria-label="Help"><HelpIcon /><Tooltip>Help</Tooltip></DockItem>
              <Peek aria-label="Terminal"><Terminal /></Peek>
              <AppsButton aria-label="Show applications"><AppsGrid /></AppsButton>
            </Dock>
            <AppWindow>
              <AppTitle>
                <span />
                <h2>***NONE***</h2>
                <AppControls>
                  <button aria-label="Minimize window"><S w={8}><path d="M0 6.500h8" stroke="#fff" /></S></button>
                  <button aria-label="Restore window"><S w={8}><path d="M.5 2.500h5v5h-5z" stroke="#fff" /><path d="M2 .5h5.500V6" stroke="#999" /></S></button>
                  <CloseDot aria-label="Close window"><S w={8}><path d="M.5.5l7 7M7.500.5l-7 7" stroke="#fff" strokeWidth="1.500" /></S></CloseDot>
                </AppControls>
              </AppTitle>
              <Chrome>
                <MenuRow>
                  {appMenus.map(([a, b, c]) => <button key={b + c}>{a}<u>{b}</u>{c}</button>)}
                </MenuRow>
                <ToolBar>
                  <Grip />
                  {tools.map((group, i) => (
                    <ToolGroup key={i}>
                      {group.map(([name, icon, props]) => <ToolButton key={name} aria-label={name} {...props}>{icon}</ToolButton>)}
                    </ToolGroup>
                  ))}
                </ToolBar>
              </Chrome>
              <Work>
                <SidePanel>
                  <Tabs><Tab>Layers</Tab></Tabs>
                  <Tabs><Tab $wide>Components</Tab><Tab $on>Explorer</Tab></Tabs>
                  <TabBody>
                    <Tree>
                      <TreeLines w={34} h={56}>
                        <path d="M4.500 8v44.500H13M4.500 36.500H13M8 4.500h5M24.500 12v8.500H34" stroke="#b8cfe5" />
                        <circle cx="4.500" cy="4.500" r="2" stroke="#6382bf" strokeWidth="1.500" /><path d="M4.500 7v4" stroke="#6382bf" strokeWidth="2" />
                      </TreeLines>
                      <TreeRow $indent={20}><IconCell $w={32}><LibraryI /></IconCell>LIBRARIES</TreeRow>
                      <TreeRow $indent={40}><IconCell $w={16}><BookI /></IconCell>noname</TreeRow>
                      <TreeRow $indent={20}><IconCell $w={32}><ErrorI /></IconCell>ERRORS</TreeRow>
                      <TreeRow $indent={20}><IconCell $w={32}><PickI /></IconCell>JOBS</TreeRow>
                    </Tree>
                  </TabBody>
                </SidePanel>
                <Splitter />
                <Editor>
                  <Canvas>No cell in this window</Canvas>
                  <Scroll $v>
                    <ScrollButton $v $edge="0 0 1px" aria-label="Scroll up"><Tri w={8} h={4} d="M4 0l4 4H0z" /></ScrollButton>
                    <Track $v><Thumb $v><S w={9} h={7}><path d="M0 .5h9M0 3.500h9M0 6.500h9" stroke="#6382bf" /></S></Thumb></Track>
                    <ScrollButton $v $edge="1px 0 0" aria-label="Scroll down"><Tri w={8} h={4} d="M0 0h8L4 4z" /></ScrollButton>
                  </Scroll>
                  <Scroll>
                    <ScrollButton $edge="0 1px 0 0" aria-label="Scroll left"><Tri w={4} h={8} d="M4 0v8L0 4z" /></ScrollButton>
                    <Track><Thumb><S w={7} h={9}><path d="M.5 0v9M3.500 0v9M6.500 0v9" stroke="#6382bf" /></S></Thumb></Track>
                    <ScrollButton $edge="0 0 0 1px" aria-label="Scroll right"><Tri w={4} h={8} d="M0 0l4 4-4 4z" /></ScrollButton>
                  </Scroll>
                </Editor>
              </Work>
              <StatusArea>
                <StatusRow>
                  <StatusCell>NOTHING SELECTED</StatusCell>
                  <StatusCell />
                  <StatusCell>TECH: mocmos (scale=200.0nm,foundry=MOSIS)</StatusCell>
                </StatusRow>
              </StatusArea>
            </AppWindow>
          </Desk>
        </Guest>
      </Stage>

      <HostStatus>
        {indicators.map(([name, art]) => (
          <React.Fragment key={name}><S>{art}</S>{name === "Features" ? <Bar /> : null}</React.Fragment>
        ))}
        <span>Right Ctrl</span>
      </HostStatus>

      <Taskbar>
        <TaskButton $w={48} aria-label="Start"><S w={16}><path d="M0 2.300l6.500-1V7.500H0zM7.500 1.200L16 0v7.500H7.500zM0 8.500h6.500v6.200L0 13.700zM7.500 8.500H16V16l-8.500-1.200z" fill="#fff" /></S></TaskButton>
        <Search>
          <S w={17}><circle cx="10.500" cy="6" r="5.300" stroke="#222" strokeWidth="1.300" /><path d="M7 10l-6 6.500" stroke="#222" strokeWidth="1.300" /></S>
          <input type="search" aria-label="Search" placeholder="Type here to search" />
        </Search>
        <TaskApps>
          <TaskButton aria-label="Cortana"><S w={16}><circle cx="8" cy="8" r="6.500" stroke="#fff" strokeWidth="2" /></S></TaskButton>
          <TaskButton $w={48} aria-label="Task view"><S w={16}><path d="M.5 0v2.500h10V0M.5 16v-2.500h10V16M.5 4.500h10v7H.5zM14.500 0v4M14.500 8v8" stroke="#fff" /><path d="M13 4h3v3h-3z" fill="#fff" /></S></TaskButton>
          <TaskGap />
          {taskIcons.map(([name, icon]) => <TaskButton key={name} aria-label={name}>{icon}</TaskButton>)}
          <TaskButton><SLBadge>SL</SLBadge></TaskButton>
          <TaskButton aria-label="Browser"><Swirl /></TaskButton>
          <TaskButton aria-label="App one"><WinApp /></TaskButton>
          <TaskButton aria-label="App two"><WinApp /></TaskButton>
          <TaskButton><QBadge>Q</QBadge></TaskButton>
          <TaskButton $line aria-label="VirtualBox manager"><Cube /></TaskButton>
          <TaskButton $w={44} $on $line aria-label="ubuntu machine"><VmIcon size={24} /></TaskButton>
        </TaskApps>
        <SysTray>
          <TrayText $w={20} aria-label="Hidden icons"><S w={12} h={7}><path d="M.5 6.500l5.500-5.500 5.500 5.500" stroke="#fff" strokeWidth="1.300" /></S></TrayText>
          <TrayText $w={46}><span>ENG</span><span>IN</span></TrayText>
          <TrayText $w={54}><span>6:43 PM</span><span>7/8/2020</span></TrayText>
          <TrayText $w={54} aria-label="Notifications"><S w={16}><path d="M0 0h16v12h-5l-3 4v-4H0z" fill="#fff" /><path d="M3 3.500h10M3 6.500h10M3 9.500h6" stroke="#30343e" /></S></TrayText>
          <ShowDesktop aria-label="Show desktop" />
        </SysTray>
      </Taskbar>
    </Page>
  );
}
